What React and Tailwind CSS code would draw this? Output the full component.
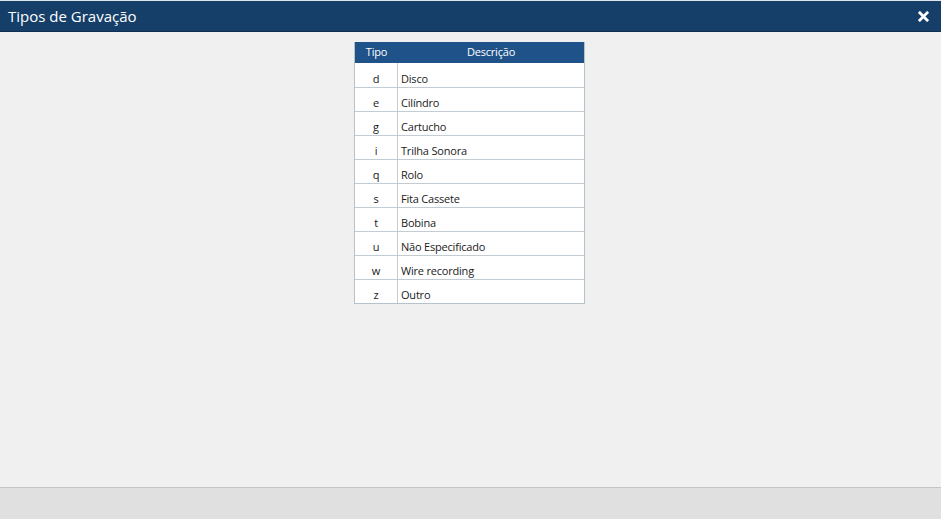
const rows = [
  ['d', 'Disco'],
  ['e', 'Cilíndro'],
  ['g', 'Cartucho'],
  ['i', 'Trilha Sonora'],
  ['q', 'Rolo'],
  ['s', 'Fita Cassete'],
  ['t', 'Bobina'],
  ['u', 'Não Especificado'],
  ['w', 'Wire recording'],
  ['z', 'Outro'],
];

export default function App() {
  return (
    <div className="h-[519px] w-[941px] flex flex-col bg-[#f0f0f0] overflow-hidden" style={{ fontFamily: '"Open Sans", "Noto Sans", sans-serif' }}>
      <header className="shrink-0 h-[32px] border-t border-t-[#dfe6ee] border-b border-b-[#0f2f50] bg-[#153f69] flex items-center justify-between pl-[8px] pr-[12px]">
        <h1 className="text-[15px] leading-none text-white">Tipos de Gravação</h1>
        <svg className="w-[11px] h-[11px]" viewBox="0 0 12 12" fill="none" stroke="white" strokeWidth="3" strokeLinecap="square">
          <path d="M2 2l8 8M10 2l-8 8" />
        </svg>
      </header>

      <main className="flex-1 flex justify-center pt-[10px] pr-[2px]">
        <div className="w-[231px] self-start border border-[#b5c2ca] border-t-0 bg-white text-[11px] tracking-[-0.2px]">
          <div className="flex h-[21px] bg-[#1f5289] text-white font-medium">
            <div className="w-[43px] flex items-center justify-center">Tipo</div>
            <div className="flex-1 flex items-center justify-center">Descrição</div>
          </div>
          {rows.map(([code, desc], i) => (
            <div key={code} className={`flex h-[24px] text-[#1a1a1a] ${i > 0 ? 'border-t border-[#c3ccd2]' : ''}`}>
              <div className="w-[43px] border-r border-[#c3ccd2] flex items-center justify-center pt-[8px]">{code}</div>
              <div className="flex-1 flex items-center pl-[3px] pt-[8px]">{desc}</div>
            </div>
          ))}
        </div>
      </main>

      <footer className="shrink-0 h-[32px] border-t border-[#c4c4c4] bg-[#e0e0e0]" />
    </div>
  );
}
